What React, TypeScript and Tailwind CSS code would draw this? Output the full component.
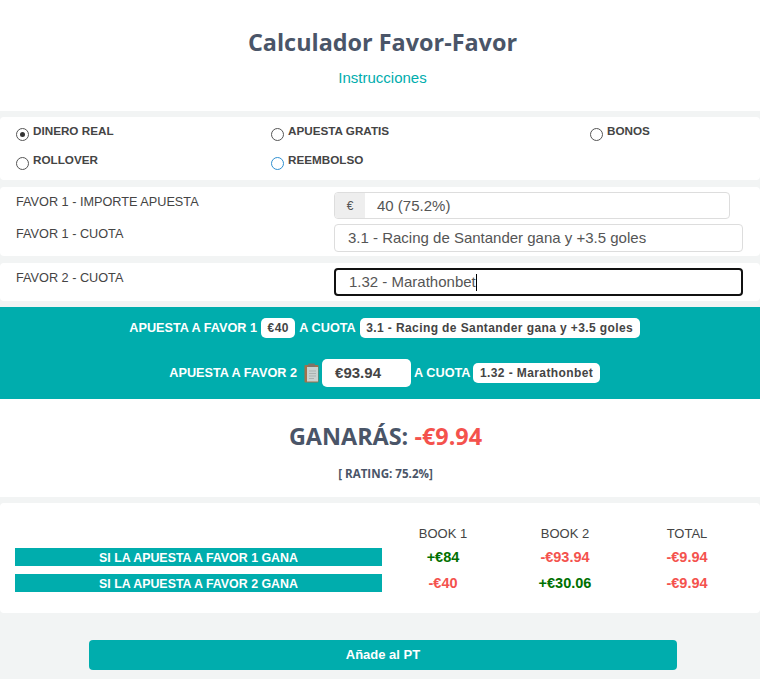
const sans = "font-['Liberation_Sans',Arial,sans-serif]";

function Radio({ label, checked, focused }: { label: string; checked?: boolean; focused?: boolean }) {
  return (
    <div className="flex items-start gap-[4px]">
      <span
        className={`mt-[5px] flex h-[13px] w-[13px] shrink-0 items-center justify-center rounded-full border ${
          focused ? "border-[#2f8fd0]" : "border-[#555]"
        }`}
      >
        {checked && <span className="h-[5px] w-[5px] rounded-full bg-[#333]" />}
      </span>
      <span className="text-[11.7px] leading-[16px] font-bold text-[#444]">{label}</span>
    </div>
  );
}

function Pill({ children }: { children: React.ReactNode }) {
  return (
    <span className="rounded-[5px] bg-white px-[6.5px] py-[3px] text-xs leading-[14px] font-bold tracking-[0.4px] text-[#444]">
      {children}
    </span>
  );
}

function ClipboardIcon() {
  return (
    <svg width="15" height="20" viewBox="0 0 15 20">
      <rect x="0.5" y="2" width="14" height="17.5" rx="1" fill="#a2714a" />
      <rect x="4" y="0.5" width="7" height="3.5" rx="1" fill="#7f7468" />
      <rect x="3" y="4" width="11" height="14.5" fill="#c9d2d0" />
      <path d="M5 8h7M5 10.5h7M5 13h7M5 15.5h5" stroke="#a9b3b1" strokeWidth="1" />
    </svg>
  );
}

function ResultRow({ label, values }: { label: string; values: { text: string; win?: boolean }[] }) {
  return (
    <div className="grid grid-cols-[367px_122px_122px_122px] items-center">
      <div className="h-[18px] bg-[#00adad] text-center text-[12.4px] leading-[21px] font-bold text-white">
        {label}
      </div>
      {values.map((v, i) => (
        <div
          key={i}
          className={`text-center text-[14.5px] leading-[20px] font-bold ${v.win ? "text-[#007000]" : "text-[#f4524d]"}`}
        >
          {v.text}
        </div>
      ))}
    </div>
  );
}

export default function App() {
  return (
    <div className={`${sans} h-[679px] overflow-hidden bg-[#f2f4f4]`}>
      <div className="flex h-[111px] flex-col items-center bg-white pt-[26px] pl-[5px]">
        <h1 className="font-['Open_Sans',sans-serif] text-[23.4px] leading-[32px] font-bold text-[#4a5568]">
          Calculador Favor-Favor
        </h1>
        <a className="mt-[12px] text-[15px] leading-[16px] text-[#00adad]">Instrucciones</a>
      </div>

      <div className="mt-[6px] grid h-[63px] grid-cols-[255px_319px_1fr] content-start gap-y-[11px] rounded-[4px] bg-white pt-[6px] pl-[16px]">
        <Radio label="DINERO REAL" checked />
        <Radio label="APUESTA GRATIS" />
        <Radio label="BONOS" />
        <Radio label="ROLLOVER" />
        <Radio label="REEMBOLSO" focused />
      </div>

      <div className="mt-[7px] grid h-[69px] grid-cols-[318px_1fr] rounded-[4px] bg-white pl-[16px]">
        <div className="pt-[7px] text-[12.7px] leading-[16px] text-[#444]">
          <div>FAVOR 1 - IMPORTE APUESTA</div>
          <div className="mt-[16px]">FAVOR 1 - CUOTA</div>
        </div>
        <div className="pt-[5px]">
          <div className="flex h-[27px] w-[396px] overflow-hidden rounded-[4px] border border-[#ddd]">
            <span className="flex w-[30px] items-center justify-center bg-[#eee] text-xs text-[#555]">€</span>
            <span className="pl-[12px] text-[15px] leading-[25px] text-[#555]">40 (75.2%)</span>
          </div>
          <div className="mt-[5px] h-[28px] w-[409px] rounded-[4px] border border-[#ddd] pl-[13px] text-[15px] leading-[26px] text-[#555]">
            3.1 - Racing de Santander gana y +3.5 goles
          </div>
        </div>
      </div>

      <div className="mt-[7px] grid h-[38px] grid-cols-[318px_1fr] rounded-[4px] bg-white pl-[16px]">
        <div className="pt-[7px] text-[12.7px] leading-[16px] text-[#444]">FAVOR 2 - CUOTA</div>
        <div className="pt-[5px]">
          <div className="flex h-[28px] w-[409px] items-center rounded-[4px] border-2 border-[#111] pl-[13px] text-[15px] text-[#555]">
            1.32 - Marathonbet
            <span className="h-[17px] w-px bg-black" />
          </div>
        </div>
      </div>

      <div className="mt-[6px] flex h-[92px] flex-col items-center bg-[#00adad] pl-[9px] text-[12.7px] font-bold text-white">
        <div className="mt-[11px] flex h-[20px] items-center gap-[4px]">
          <span className="pt-px">APUESTA A FAVOR 1</span>
          <Pill>€40</Pill>
          <span className="pt-px">A CUOTA</span>
          <Pill>3.1 - Racing de Santander gana y +3.5 goles</Pill>
        </div>
        <div className="mt-[21px] flex h-[28px] items-center gap-[3px]">
          <span className="pt-px">APUESTA A FAVOR 2</span>
          <span className="ml-[4px] flex items-center">
            <ClipboardIcon />
          </span>
          <span className="h-[28px] w-[89px] rounded-[5px] bg-white pl-[13px] text-[15px] leading-[28px] font-bold text-[#444]">
            €93.94
          </span>
          <span className="pt-px">A CUOTA</span>
          <Pill>1.32 - Marathonbet</Pill>
        </div>
      </div>

      <div className="flex h-[98px] flex-col items-center bg-white pt-[20px] pl-[11px] font-['Open_Sans',sans-serif] font-bold">
        <div className="text-[23.4px] leading-[34px] text-[#4a5568]">
          GANARÁS: <span className="text-[#f4524d]">-€9.94</span>
        </div>
        <div className="mt-[13px] text-[11.6px] leading-[15px] text-[#4a5568]">[ RATING: 75.2%]</div>
      </div>

      <div className="mt-[6px] h-[110px] rounded-[4px] bg-white pt-[22px] pl-[15px]">
        <div className="grid grid-cols-[367px_122px_122px_122px] text-center text-[13px] leading-[18px] text-[#444]">
          <span />
          <span>BOOK 1</span>
          <span>BOOK 2</span>
          <span>TOTAL</span>
        </div>
        <div className="mt-[4px] flex flex-col gap-[6px]">
          <ResultRow
            label="SI LA APUESTA A FAVOR 1 GANA"
            values={[{ text: "+€84", win: true }, { text: "-€93.94" }, { text: "-€9.94" }]}
          />
          <ResultRow
            label="SI LA APUESTA A FAVOR 2 GANA"
            values={[{ text: "-€40" }, { text: "+€30.06", win: true }, { text: "-€9.94" }]}
          />
        </div>
      </div>

      <div className="flex justify-center pt-[27px] pl-[6px]">
        <button className="h-[30px] w-[588px] rounded-[4px] bg-[#00adad] text-[13px] font-bold text-white">
          Añade al PT
        </button>
      </div>
    </div>
  );
}
